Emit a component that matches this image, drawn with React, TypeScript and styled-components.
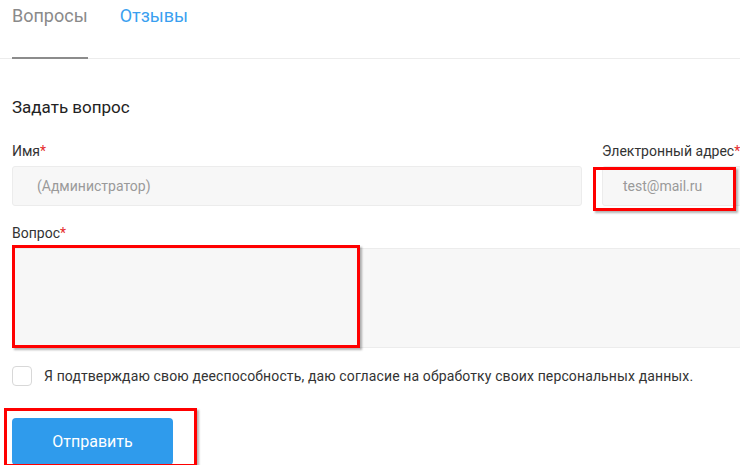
import React, { FC } from 'react';
import styled, { createGlobalStyle } from 'styled-components';

const GlobalStyle = createGlobalStyle`
  html, body {
    margin: 0;
    padding: 0;
    background: #fff;
    overflow: hidden;
  }
  body {
    font-family: Roboto, "Noto Sans", sans-serif;
    color: #222;
  }
`;

const Root = styled.div`
  width: 760px;
`;

const Tabs = styled.div`
  display: flex;
  gap: 32px;
  padding: 0 12px;
  border-bottom: 1px solid #ececec;
`;

const Tab = styled.div<{ $active?: boolean; $current?: boolean }>`
  font-size: 18px;
  line-height: 20px;
  padding: 6px 0 31px;
  color: ${(p) => (p.$active ? '#3a9ff0' : '#8a8a8a')};
  border-bottom: 2px solid ${(p) => (p.$current ? '#8c8c8c' : 'transparent')};
  margin-bottom: -1px;
`;

const Form = styled.div`
  width: 730px;
  padding: 38px 0 0 12px;
`;

const Heading = styled.div`
  font-size: 17px;
  line-height: 20px;
  color: #222;
  margin-bottom: 26px;
`;

const Row = styled.div`
  display: grid;
  grid-template-columns: 570px 1fr;
  column-gap: 20px;
`;

const Field = styled.div`
  display: flex;
  flex-direction: column;
`;

const Label = styled.div`
  font-size: 14px;
  line-height: 16px;
  color: #333;
  margin-bottom: 7px;
  white-space: nowrap;
`;

const Star = styled.span`
  color: #e52b2b;
`;

const Holder = styled.div`
  position: relative;
`;

const Input = styled.div<{ $pad: number }>`
  box-sizing: border-box;
  height: 40px;
  background: #f7f7f7;
  border: 1px solid #ececec;
  border-radius: 3px;
  font-size: 14px;
  color: #9a9a9a;
  display: flex;
  align-items: center;
  padding-left: ${(p) => p.$pad}px;
`;

const TextArea = styled.div`
  box-sizing: border-box;
  height: 100px;
  background: #f7f7f7;
  border: 1px solid #ececec;
  border-radius: 3px;
`;

const Mark = styled.div<{ $l: number; $t: number; $w: number; $h: number }>`
  position: absolute;
  left: ${(p) => p.$l}px;
  top: ${(p) => p.$t}px;
  width: ${(p) => p.$w}px;
  height: ${(p) => p.$h}px;
  box-sizing: border-box;
  border: 3px solid #ff0000;
  box-shadow: 2px 2px 2px rgba(0, 0, 0, 0.3);
  pointer-events: none;
`;

const QuestionField = styled(Field)`
  margin-top: 19px;
`;

const Consent = styled.label`
  display: flex;
  align-items: center;
  gap: 12px;
  margin-top: 18px;
  font-size: 14px;
  letter-spacing: 0.12px;
  color: #333;
`;

const Box = styled.span`
  box-sizing: border-box;
  width: 20px;
  height: 20px;
  border: 1px solid #d8d8d8;
  border-radius: 4px;
  background: #fff;
`;

const ButtonWrap = styled.div`
  position: relative;
  width: 161px;
  margin-top: 32px;
`;

const Button = styled.button`
  width: 161px;
  height: 47px;
  border: none;
  border-radius: 4px;
  background: #2f9bec;
  color: #fff;
  font-family: Roboto, sans-serif;
  font-size: 16px;
  cursor: pointer;
`;

const App: FC = () => (
  <Root>
    <GlobalStyle />
    <Tabs>
      <Tab $current>Вопросы</Tab>
      <Tab $active>Отзывы</Tab>
    </Tabs>

    <Form>
      <Heading>Задать вопрос</Heading>

      <Row>
        <Field>
          <Label>
            Имя<Star>*</Star>
          </Label>
          <Input $pad={24}>(Администратор)</Input>
        </Field>
        <Field>
          <Label>
            Электронный адрес<Star>*</Star>
          </Label>
          <Holder>
            <Input $pad={20}>test@mail.ru</Input>
            <Mark $l={-9} $t={1} $w={143} $h={44} />
          </Holder>
        </Field>
      </Row>

      <QuestionField>
        <Label>
          Вопрос<Star>*</Star>
        </Label>
        <Holder>
          <TextArea />
          <Mark $l={0} $t={-3} $w={348} $h={103} />
        </Holder>
      </QuestionField>

      <Consent>
        <Box />
        Я подтверждаю свою дееспособность, даю согласие на обработку своих персональных данных.
      </Consent>

      <ButtonWrap>
        <Button>Отправить</Button>
        <Mark $l={-8} $t={-10} $w={193} $h={59} />
      </ButtonWrap>
    </Form>
  </Root>
);

export default App;
